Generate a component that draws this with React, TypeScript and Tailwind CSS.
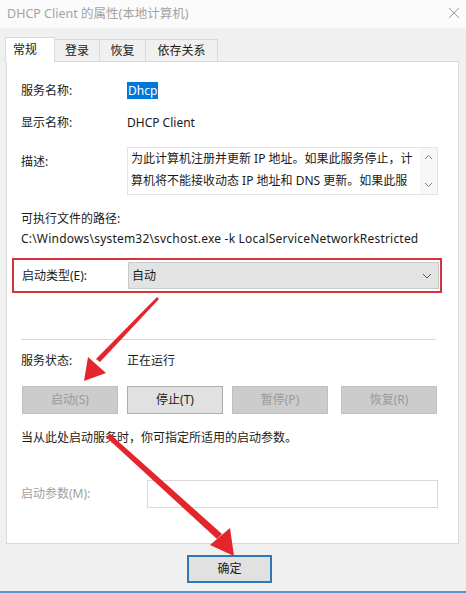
const font = "font-['Noto_Sans','Noto_Sans_CJK_SC',sans-serif]";

function Btn({ label, disabled, className }: { label: string; disabled?: boolean; className?: string }) {
  return (
    <div
      className={
        'h-[28px] flex items-center justify-center border text-[12px] ' +
        (disabled
          ? 'bg-[#cccccc] border-[#bfbfbf] text-[#9a9a9a] '
          : 'bg-[#e1e1e1] border-[#adadad] text-[#1a1a1a] ') +
        (className ?? '')
      }
    >
      {label}
    </div>
  )
}

function Arrows() {
  return (
    <svg className="absolute inset-0 pointer-events-none" width="466" height="593" viewBox="0 0 466 593">
      {/* arrow to 启动 button */}
      <polygon points="157,297 159,299 100,362 96,359" fill="#e2262c" />
      <polygon points="84,381 88,357 106,373" fill="#e2262c" />
      {/* arrow to 确定 button */}
      <polygon points="106,437 110,434 222,534 217,539" fill="#e2262c" />
      <polygon points="234,556 210,545 230,528" fill="#e2262c" />
    </svg>
  )
}

export default function App() {
  return (
    <div className={`relative w-[466px] h-[593px] bg-[#f0f0f0] overflow-hidden text-[12px] text-[#1a1a1a] ${font}`}>
      {/* Title bar */}
      <div className="h-[28px] bg-[#fbfbfb] flex items-center justify-between pl-[7px] pr-[6px]">
        <span className="text-[12.5px] text-[#a3a3a3]">DHCP Client 的属性(本地计算机)</span>
        <svg width="12" height="12" viewBox="0 0 12 12" className="mb-[2px]">
          <path d="M1 1 L11 11 M11 1 L1 11" stroke="#9a9a9a" strokeWidth="1" />
        </svg>
      </div>

      {/* Tabs */}
      <div className="flex items-end h-[33px] pl-[5px]">
        <div className="w-[50px] h-[25px] bg-white border border-b-0 border-[#d9d9d9] flex items-center pl-[7px] relative z-10 -mb-px">
          常规
        </div>
        <div className="w-[45px] h-[22px] bg-[#f0f0f0] border border-l-0 border-b-0 border-[#d9d9d9] flex items-center justify-center">
          登录
        </div>
        <div className="w-[46px] h-[22px] bg-[#f0f0f0] border border-l-0 border-b-0 border-[#d9d9d9] flex items-center justify-center">
          恢复
        </div>
        <div className="w-[72px] h-[22px] bg-[#f0f0f0] border border-l-0 border-b-0 border-[#d9d9d9] flex items-center justify-center">
          依存关系
        </div>
      </div>

      {/* Panel */}
      <div className="ml-[6px] w-[453px] h-[483px] bg-white border border-[#d9d9d9] flex flex-col">
        <div className="mt-[20px] h-[17px] flex items-center pl-[14px]">
          <span className="w-[106px]">服务名称:</span>
          <span className="bg-[#0078d7] text-white px-[1px] leading-[17px]">Dhcp</span>
        </div>

        <div className="mt-[15px] h-[18px] flex items-center pl-[14px]">
          <span className="w-[106px]">显示名称:</span>
          <span>DHCP Client</span>
        </div>

        <div className="mt-[15px] flex pl-[14px]">
          <span className="w-[106px] pt-[6px] leading-[18px]">描述:</span>
          <div className="w-[311px] h-[48px] border border-[#e3e3e3] flex">
            <div className="flex-1 pl-[3px] leading-[22px] text-[12px]">
              为此计算机注册并更新 IP 地址。如果此服务停止，计<br />
              算机将不能接收动态 IP 地址和 DNS 更新。如果此服
            </div>
            <div className="w-[17px] flex flex-col items-center justify-between py-[6px] bg-[#f7f7f7]">
              <svg width="9" height="6" viewBox="0 0 9 6"><path d="M1 5 L4.5 1.5 L8 5" stroke="#7a7a7a" fill="none" /></svg>
              <svg width="9" height="6" viewBox="0 0 9 6"><path d="M1 1 L4.5 4.5 L8 1" stroke="#7a7a7a" fill="none" /></svg>
            </div>
          </div>
        </div>

        <div className="mt-[15px] h-[18px] flex items-center pl-[14px]">可执行文件的路径:</div>
        <div className="mt-[2px] h-[18px] flex items-center pl-[14px] tracking-[0.2px] whitespace-nowrap">
          C:\Windows\system32\svchost.exe -k LocalServiceNetworkRestricted
        </div>

        <div className="mt-[10px] ml-[5px] w-[430px] h-[35px] border-2 border-[#d8333b] flex items-center pl-[8px]">
          <span className="w-[106px]">启动类型(E):</span>
          <div className="w-[311px] h-[27px] bg-[#e3e3e3] border border-[#c9c9c9] flex items-center justify-between pl-[3px] pr-[6px]">
            <span>自动</span>
            <svg width="10" height="6" viewBox="0 0 10 6"><path d="M1 1 L5 5 L9 1" stroke="#555" fill="none" /></svg>
          </div>
        </div>

        <div className="mt-[46px] ml-[14px] w-[415px] border-t border-[#d6d6d6]" />

        <div className="mt-[12px] h-[18px] flex items-center pl-[14px]">
          <span className="w-[106px]">服务状态:</span>
          <span>正在运行</span>
        </div>

        <div className="mt-[16px] flex pl-[15px]">
          <Btn label="启动(S)" disabled className="w-[96px]" />
          <Btn label="停止(T)" className="w-[96px] ml-[9px]" />
          <Btn label="暂停(P)" disabled className="w-[96px] ml-[9px]" />
          <Btn label="恢复(R)" disabled className="w-[96px] ml-[13px]" />
        </div>

        <div className="mt-[15px] h-[18px] flex items-center pl-[14px]">当从此处启动服务时，你可指定所适用的启动参数。</div>

        <div className="mt-[33px] flex items-center pl-[14px]">
          <span className="w-[126px] text-[#a0a0a0]">启动参数(M):</span>
          <div className="w-[291px] h-[28px] border border-[#d9d9d9] bg-white" />
        </div>
      </div>

      {/* Footer */}
      <div className="flex pt-[11px] pl-[187px]">
        <div className="w-[85px] h-[28px] bg-[#e1e1e1] border-2 border-[#2f77b5] flex items-center justify-center">
          确定
        </div>
      </div>

      <div className="absolute left-0 right-0 bottom-0 h-[2px] bg-[#5b93cf]" />

      <Arrows />
    </div>
  )
}
